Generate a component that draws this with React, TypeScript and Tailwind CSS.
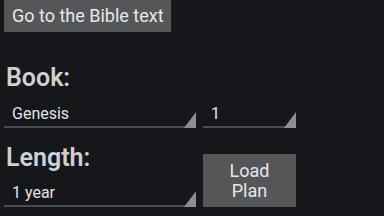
function Spinner({ value, width }: { value: string; width: string }) {
  return (
    <div className={`relative ${width} pb-[2px]`}>
      <div className="h-5 pl-2 text-[16px] leading-5 text-[#e4e4e4]">{value}</div>
      <div className="mt-[2px] h-[2px] bg-[#4a4c50]" />
      {/* corner triangle of the Holo spinner */}
      <svg className="absolute bottom-[2px] right-0" width="12" height="16" viewBox="0 0 12 16">
        <polygon points="12,0 12,16 0,16" fill="#8c8e91" />
      </svg>
    </div>
  );
}

export default function App() {
  return (
    <div className="h-[216px] w-[384px] overflow-hidden bg-[#15171b] font-['Roboto',sans-serif]">
      <div className="pl-1">
        <button className="h-8 bg-[#555657] pl-2 pr-[7px] text-[18px] leading-8 text-[#e8e8e8]">
          Go to the Bible text
        </button>
      </div>

      {/* Book */}
      <div className="mt-[33px] pl-[6px] text-[25px] font-semibold leading-[25px] text-[#cfd0d1]">Book:</div>
      <div className="mt-[14px] flex items-end gap-[7px] pl-1">
        <Spinner value="Genesis" width="w-[192px]" />
        <Spinner value="1" width="w-[93px]" />
      </div>

      {/* Length */}
      <div className="flex items-end gap-[7px] pl-1">
        <div className="w-[192px]">
          <div className="mt-[15px] pl-[2px] text-[25px] font-semibold leading-[25px] text-[#cfd0d1]">Length:</div>
          <div className="mt-[13px]">
            <Spinner value="1 year" width="w-[192px]" />
          </div>
        </div>
        <button className="mb-[2px] flex h-[53px] w-[93px] flex-col items-center justify-center bg-[#555657] text-[18px] leading-5 text-[#e8e8e8]">
          <span>Load</span>
          <span>Plan</span>
        </button>
      </div>
    </div>
  );
}
